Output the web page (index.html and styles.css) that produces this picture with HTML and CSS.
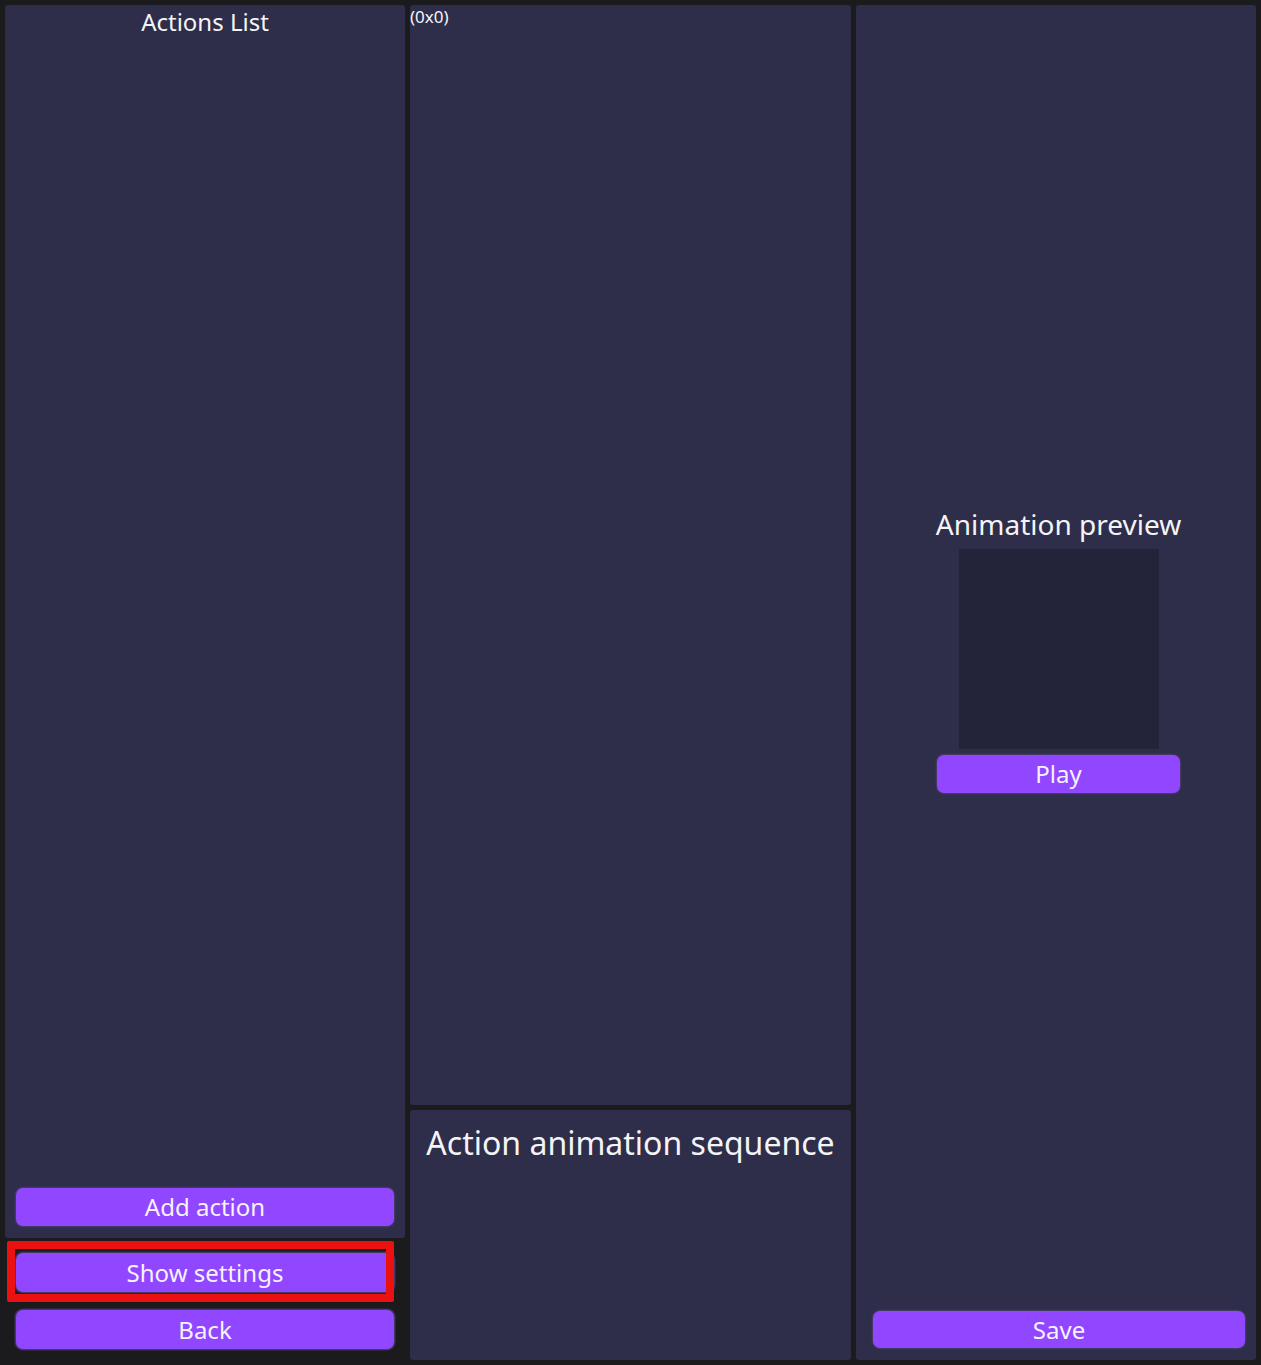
FILE: index.html
```html
<!DOCTYPE html>
<html>
<head>
<meta charset="utf-8">
<link rel="stylesheet" href="styles.css">
</head>
<body>
<div class="app">
  <div class="col col-left">
    <div class="panel panel-actions">
      <div class="title-sm">Actions List</div>
      <div class="spacer"></div>
      <button class="btn btn-add">Add action</button>
    </div>
    <div class="settings-wrap">
      <button class="btn btn-settings">Show settings</button>
      <div class="highlight"></div>
    </div>
    <button class="btn btn-back">Back</button>
  </div>
  <div class="col col-mid">
    <div class="panel panel-canvas">
      <div class="size-label">(0x0)</div>
    </div>
    <div class="panel panel-seq">
      <div class="title-lg">Action animation sequence</div>
    </div>
  </div>
  <div class="col col-right">
    <div class="panel panel-preview">
      <div class="preview-group">
        <div class="title-md">Animation preview</div>
        <div class="preview-box"></div>
        <button class="btn btn-play">Play</button>
      </div>
      <div class="spacer"></div>
      <button class="btn btn-save">Save</button>
    </div>
  </div>
</div>
</body>
</html>
```
FILE: styles.css
```css
* { box-sizing: border-box; }
html, body {
  margin: 0;
  padding: 0;
  background: #1b1b1e;
  width: 1261px;
  height: 1365px;
  overflow: hidden;
  font-family: "Noto Sans", "Open Sans", sans-serif;
  color: #f4f4f6;
}
.app {
  display: grid;
  grid-template-columns: 400px 441px 400px;
  column-gap: 5px;
  padding: 5px;
  height: 1365px;
}
.col {
  display: flex;
  flex-direction: column;
  min-height: 0;
}
.panel {
  background: #2e2d4a;
  border-radius: 3px;
  display: flex;
  flex-direction: column;
}
.spacer { flex: 1; }

.btn {
  display: block;
  height: 38px;
  border: none;
  border-radius: 7px;
  background: #9146ff;
  box-shadow: 0 0 0 1px #433a62, 0 0 0 2px rgba(60, 52, 88, 0.5);
  color: #f6f2ff;
  font-family: "Noto Sans", "Open Sans", sans-serif;
  font-size: 24px;
  line-height: 38px;
  padding: 0;
  text-align: center;
}

/* left column */
.panel-actions {
  height: 1233px;
}
.title-sm {
  font-size: 24px;
  line-height: 33px;
  text-align: center;
}
.btn-add {
  margin: 0 11px 12px 11px;
}
.settings-wrap {
  position: relative;
  margin-top: 15px;
}
.btn-settings {
  width: 378px;
  margin-left: 11px;
  height: 39px;
  line-height: 40px;
}
.highlight {
  position: absolute;
  left: 2px;
  top: -12px;
  width: 387px;
  height: 61px;
  border: 8px solid #ec1111;
  border-radius: 2px;
}
.btn-back {
  width: 378px;
  margin: 18px 0 0 11px;
  height: 39px;
}

/* middle column */
.panel-canvas {
  height: 1100px;
}
.size-label {
  font-size: 17px;
  line-height: 24px;
}
.panel-seq {
  margin-top: 5px;
  flex: 1;
}
.title-lg {
  font-size: 32px;
  line-height: 44px;
  text-align: center;
  margin-top: 11px;
}

/* right column */
.panel-preview {
  height: 1355px;
  padding-left: 5px;
}
.preview-group {
  align-self: center;
  display: flex;
  flex-direction: column;
  align-items: center;
  margin-top: 500px;
}
.title-md {
  font-size: 28px;
  line-height: 38px;
}
.preview-box {
  width: 200px;
  height: 200px;
  background: #23233a;
  margin-top: 6px;
}
.btn-play {
  align-self: stretch;
  margin-top: 6px;
  margin-left: 1px;
  margin-right: 1px;
}
.btn-save {
  margin: 0 11px 12px 12px;
  height: 37px;
}
```
